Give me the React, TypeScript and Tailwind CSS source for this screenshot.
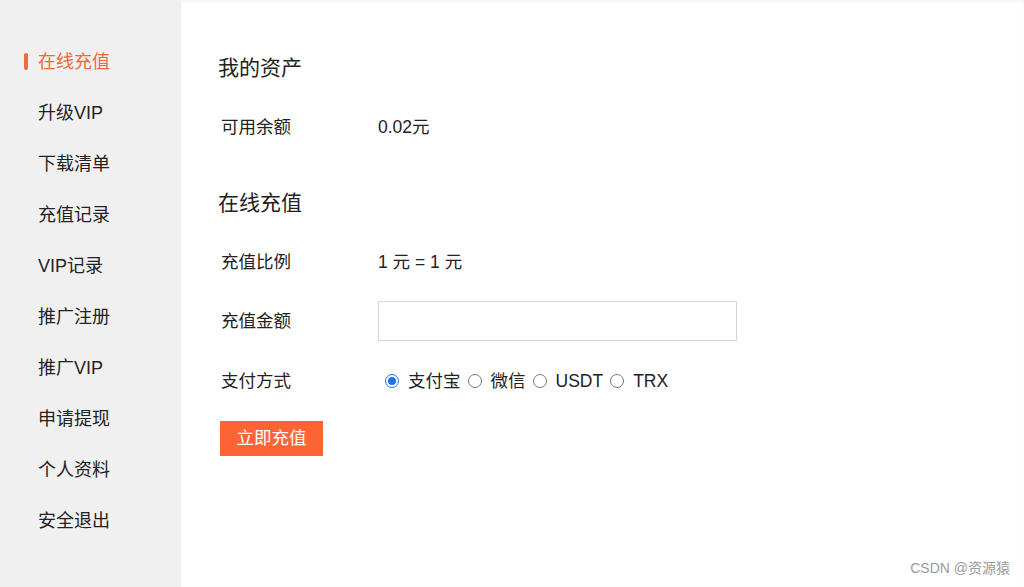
import { useState } from "react";

const menu = ["在线充值", "升级VIP", "下载清单", "充值记录", "VIP记录", "推广注册", "推广VIP", "申请提现", "个人资料", "安全退出"];

const payTypes = ["支付宝", "微信", "USDT", "TRX"];

const font = { fontFamily: '"Liberation Sans", "Noto Sans CJK SC", sans-serif' };

export default function App() {
  const [active] = useState(0);
  const [pay, setPay] = useState(0);
  const [amount, setAmount] = useState("");

  return (
    <div className="w-[1024px] h-[587px] flex bg-white text-[#222] relative overflow-hidden" style={font}>
      {/* sidebar */}
      <aside className="w-[181px] bg-[#f0f0f0] pt-[37px] shrink-0">
        {menu.map((item, i) => (
          <div key={item} className="h-[51px] flex items-center relative pl-[38px]">
            {i === active && <span className="absolute left-[24px] top-[16px] w-[4px] h-[17px] rounded-full bg-[#ee6a3a]" />}
            <span className={`text-[18px] ${i === active ? "text-[#ee6a3a]" : "text-[#222]"}`}>{item}</span>
          </div>
        ))}
      </aside>

      {/* main */}
      <main className="flex-1 pl-[37px] pt-[54px] shadow-[inset_0_2px_3px_rgba(0,0,0,0.04)]">
        <h2 className="text-[21px] leading-[28px] mb-[31px]">我的资产</h2>
        <div className="flex items-center h-[28px] pl-[3px] text-[17.5px]">
          <span className="w-[157px]">可用余额</span>
          <span>0.02元</span>
        </div>

        <h2 className="text-[21px] leading-[28px] mt-[48px] mb-[31px]">在线充值</h2>
        <div className="flex items-center h-[28px] pl-[3px] text-[17.5px]">
          <span className="w-[157px]">充值比例</span>
          <span>1 元 = 1 元</span>
        </div>
        <div className="flex items-center h-[40px] pl-[3px] text-[17.5px] mt-[25px]">
          <span className="w-[157px]">充值金额</span>
          <input
            value={amount}
            onChange={(e) => setAmount(e.target.value)}
            className="w-[359px] h-[40px] border border-[#d6d6d6] outline-none px-2"
          />
        </div>
        <div className="flex items-center h-[28px] pl-[3px] text-[17.5px] mt-[26px]">
          <span className="w-[157px]">支付方式</span>
          <div className="flex items-center">
            {payTypes.map((p, i) => (
              <label key={p} className="flex items-center cursor-pointer">
                <span
                  className={`w-[14px] h-[14px] rounded-full border flex items-center justify-center ml-[7px] mr-[9px] ${
                    pay === i ? "border-[#1a73e8]" : "border-[#777]"
                  }`}
                  onClick={() => setPay(i)}
                >
                  {pay === i && <span className="w-[8px] h-[8px] rounded-full bg-[#1a73e8]" />}
                </span>
                <span>{p}</span>
              </label>
            ))}
          </div>
        </div>
        <button className="mt-[26px] w-[103px] h-[35px] bg-[#fe6433] text-white text-[17.5px] ml-[2px]">立即充值</button>
      </main>

      <div className="absolute right-[14px] bottom-[8px] text-[14px] text-[#9a9a9a]">CSDN @资源猿</div>
    </div>
  );
}
